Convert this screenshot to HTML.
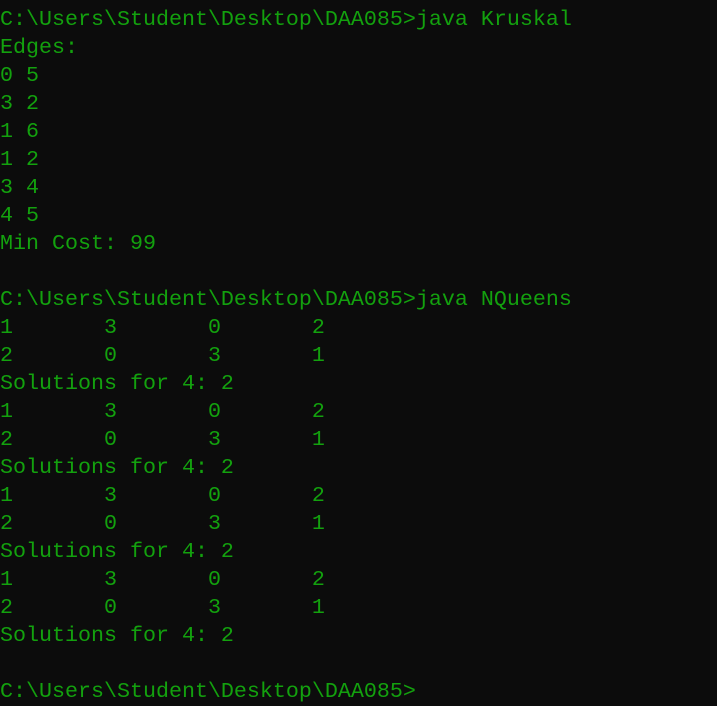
<!DOCTYPE html>
<html><head><style>
html,body{margin:0;padding:0;background:#0c0c0c;width:717px;height:706px;overflow:hidden}
pre{margin:0;padding:6px 0 0 0;color:#13a10e;font-family:"Liberation Mono",monospace;font-size:21.67px;line-height:28px;tab-size:8;-moz-tab-size:8;white-space:pre}
</style></head><body><pre>C:\Users\Student\Desktop\DAA085&gt;java Kruskal
Edges:
0 5
3 2
1 6
1 2
3 4
4 5
Min Cost: 99

C:\Users\Student\Desktop\DAA085&gt;java NQueens
1	3	0	2
2	0	3	1
Solutions for 4: 2
1	3	0	2
2	0	3	1
Solutions for 4: 2
1	3	0	2
2	0	3	1
Solutions for 4: 2
1	3	0	2
2	0	3	1
Solutions for 4: 2

C:\Users\Student\Desktop\DAA085&gt;</pre></body></html>
